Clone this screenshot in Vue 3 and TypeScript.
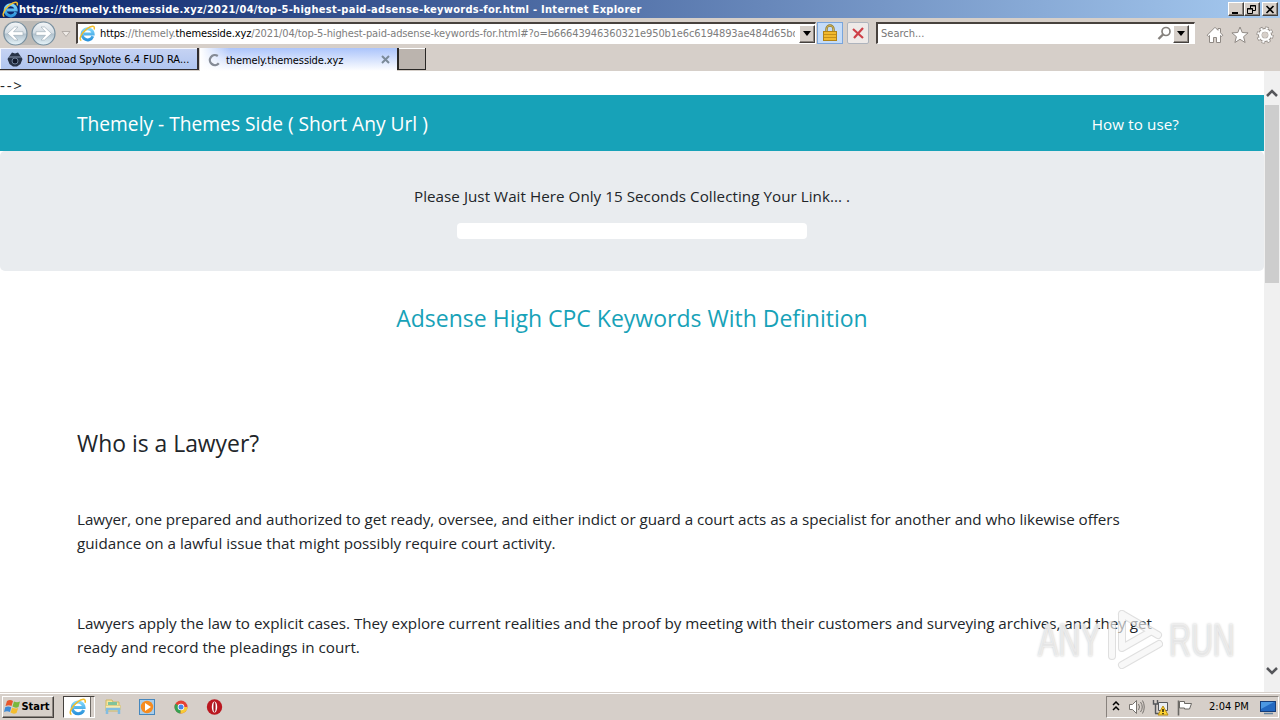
<script setup lang="ts">
import { ref } from 'vue'

interface Line {
  text: string
  spacing: number
}

const title = 'https://themely.themesside.xyz/2021/04/top-5-highest-paid-adsense-keywords-for.html - Internet Explorer'
const path = '/2021/04/top-5-highest-paid-adsense-keywords-for.html#?o=b66643946360321e950b1e6c6194893ae484d65bd'
const search = ref('')

const lawyer: Line[] = [
  { text: 'Lawyer, one prepared and authorized to get ready, oversee, and either indict or guard a court acts as a specialist for another and who likewise offers', spacing: -0.04 },
  { text: 'guidance on a lawful issue that might possibly require court activity.', spacing: 0 },
]
const practice: Line[] = [
  { text: 'Lawyers apply the law to explicit cases. They explore current realities and the proof by meeting with their customers and surveying archives, and they get', spacing: -0.035 },
  { text: 'ready and record the pleadings in court.', spacing: -0.01 },
]
</script>

<template>
  <div class="screen">
    <svg class="defs" width="0" height="0">
      <defs>
        <linearGradient id="ie-blue" x1="0" y1="0" x2="0" y2="1">
          <stop offset="0" stop-color="#7fd6fb" />
          <stop offset="1" stop-color="#2b94dc" />
        </linearGradient>
        <linearGradient id="nav-disc" x1="0" y1="0" x2="0" y2="1">
          <stop offset="0" stop-color="#f4f6f8" />
          <stop offset=".48" stop-color="#d3dce3" />
          <stop offset=".52" stop-color="#b1c1cc" />
          <stop offset="1" stop-color="#e6f4fa" />
        </linearGradient>
        <symbol id="ie" viewBox="0 0 16 16">
          <path d="M13 10.600A5.200 5.200 0 1 1 13.300 8.400H4.500" fill="none" stroke="url(#ie-blue)" stroke-width="2.800" />
          <path d="M2.200 14.600C-.8 13.700 2.600 7.200 7.400 3.600 11.200.7 15.400-.2 14.300 4.200" fill="none" stroke="#f2bd2c" stroke-width="1.400" />
        </symbol>
      </defs>
    </svg>

    <header class="titlebar">
      <svg class="title-icon" width="17" height="17"><use href="#ie" /></svg>
      <span class="title">{{ title }}</span>
      <div class="window-buttons">
        <button class="win"><svg width="14" height="11"><path d="M3 8h6v2H3z" /></svg></button>
        <button class="win"><svg width="14" height="11" fill="none" stroke="#000"><path d="M5.500 4V1.500h5v5H8M5 2h6" /><path d="M2.500 4.500h5v5h-5zM2 5h6" /></svg></button>
        <button class="win close"><svg width="14" height="11"><path d="M3.500 2l7 7M10.500 2l-7 7" stroke="#000" stroke-width="1.600" /></svg></button>
      </div>
    </header>

    <nav class="toolbar">
      <svg class="arrows" width="76" height="30">
        <path d="M15 3h28a12 12 0 0 1 0 24H15a12 12 0 0 1 0-24z" fill="#bdbab6" />
        <g fill="url(#nav-disc)" stroke="#7890a0" stroke-width="1.200">
          <circle cx="15.500" cy="15.500" r="11.500" />
          <circle cx="43.500" cy="15.500" r="11.500" />
        </g>
        <g fill="#fff" stroke="#99a8b3" stroke-width=".6">
          <path d="M7.500 15.500l7-6.500h3.500l-4.500 4.700h9.500v3.600h-9.500l4.500 4.700h-3.500z" />
          <path d="M51.500 15.500l-7-6.500H41l4.500 4.700H36v3.600h9.500L41 22h3.500z" />
        </g>
        <path d="M62 13.500h8l-4 5z" fill="#eeeae6" stroke="#a7a19c" stroke-width=".8" />
      </svg>
      <div class="address">
        <svg width="17" height="17"><use href="#ie" /></svg>
        <div class="url"><b>https</b>://themely.<b>themesside.xyz</b>{{ path }}</div>
        <button class="drop"><svg width="9" height="5"><path d="M0 0h8L4 5z" /></svg></button>
      </div>
      <button class="lock">
        <svg width="16" height="18">
          <path d="M4.500 8V5a3.500 3.500 0 0 1 7 0v3" fill="none" stroke="#8f7a31" stroke-width="2.400" />
          <path d="M4.500 8V5a3.500 3.500 0 0 1 7 0v3" fill="none" stroke="#e1c76a" stroke-width=".8" />
          <rect x="1.500" y="7.500" width="13" height="9" fill="#f1b92d" stroke="#b18318" />
          <path d="M2 10.500h12M2 13.500h12" stroke="#c69019" />
        </svg>
      </button>
      <button class="stop"><svg width="12" height="12"><path d="M1 2l10 9M11 1L2 11" stroke="#ce4048" stroke-width="2.200" /></svg></button>
      <div class="search">
        <input v-model="search" placeholder="Search...">
        <svg width="15" height="15" fill="none" stroke="#85817d"><circle cx="9" cy="5.500" r="4" stroke-width="1.700" /><path d="M6 8.500L1.500 13" stroke-width="2.400" /></svg>
        <button class="drop"><svg width="9" height="5"><path d="M0 0h8L4 5z" /></svg></button>
      </div>
      <div class="commands">
        <svg width="18" height="18" fill="#fff" stroke="#8f8984"><path d="M1.200 9.200L9 1.300l3 3V2.500h2.500v4.300l2.300 2.400-1.300 1.200-1-.9v7h-4v-5h-3v5h-4v-7l-1 .9z" /></svg>
        <svg width="18" height="18" fill="#fff" stroke="#8f8984"><path d="M9 1l2.200 5.500 5.900.4-4.500 3.800 1.500 5.800L9 13.300l-5.100 3.200 1.500-5.800L.9 6.900l5.900-.4z" /></svg>
        <svg width="18" height="18" viewBox="0 0 18 18">
          <circle cx="9" cy="9" r="7" fill="none" stroke="#8f8984" stroke-width="3.200" stroke-dasharray="3.100 2.398" />
          <circle cx="9" cy="9" r="5" fill="none" stroke="#8f8984" stroke-width="4" />
          <circle cx="9" cy="9" r="6.800" fill="none" stroke="#fff" stroke-width="2" stroke-dasharray="2.200 3.141" stroke-dashoffset="-.45" />
          <circle cx="9" cy="9" r="4.700" fill="none" stroke="#fff" stroke-width="2.700" />
        </svg>
      </div>
    </nav>

    <div class="tabs">
      <div class="tab back">
        <svg width="16" height="16">
          <path d="M2.500 5L5 1.500l3 1 3-1L13.500 5l2 3-2 5-3.500 2.500H6L2.500 13 .5 8z" fill="#283347" />
          <path d="M2 6h12" stroke="#68768a" stroke-width="1.500" /><circle cx="8" cy="10" r="3" fill="#11182a" stroke="#71819a" />
        </svg>
        <span>Download SpyNote 6.4 FUD RA...</span>
      </div>
      <div class="tab front">
        <svg width="14" height="14"><path d="M10.800 3a5 5 0 1 0 1 7.200" fill="none" stroke="#858b96" stroke-width="2.300" /></svg>
        <span>themely.themesside.xyz</span>
        <svg class="x" width="9" height="9"><path d="M1 1l7 7M8 1L1 8" stroke="#7b8a99" stroke-width="2" /></svg>
      </div>
      <div class="new-tab" />
    </div>

    <div class="viewport">
      <main class="page">
        <div class="stray">--&gt;</div>
        <div class="navbar">
          <span class="brand">Themely - Themes Side ( Short Any Url )</span>
          <a class="how">How to use?</a>
        </div>
        <section class="wait">
          <p>Please Just Wait Here Only 15 Seconds Collecting Your Link... .</p>
          <div class="progress" />
        </section>
        <h4 class="headline">Adsense High CPC Keywords With Definition</h4>
        <article>
          <h4>Who is a Lawyer?</h4>
          <p><span v-for="line in lawyer" :key="line.text" class="line" :style="{ letterSpacing: line.spacing + 'px' }">{{ line.text }}</span></p>
          <p class="second"><span v-for="line in practice" :key="line.text" class="line" :style="{ letterSpacing: line.spacing + 'px' }">{{ line.text }}</span></p>
        </article>
      </main>
      <div class="scrollbar">
        <svg width="16" height="34"><path d="M3 25l5-5 5 5" fill="none" stroke="#55565a" stroke-width="2.500" /></svg>
        <div class="thumb" />
        <svg class="down" width="16" height="34"><path d="M3 10l5 5 5-5" fill="none" stroke="#55565a" stroke-width="2.500" /></svg>
      </div>
      <div class="watermark">
        <span class="any">ANY</span>
        <svg width="60" height="64" fill="none" stroke-linejoin="round" stroke-linecap="round">
          <g stroke="#cfcfcf" stroke-width="8">
            <path d="M5 48V17M15 6l36 21M15 6v34l28-16M15 57l37-21" />
          </g>
          <g stroke="#f5f5f5" stroke-width="6">
            <path d="M5 48V17M15 6l36 21M15 6v34l28-16M15 57l37-21" />
          </g>
        </svg>
        <span class="run">RUN</span>
      </div>
    </div>

    <footer class="taskbar">
      <button class="start">
        <svg width="17" height="16">
          <path d="M3 2q3-2 6 0L7.500 7Q5 5.500 1.500 7z" fill="#e8562b" />
          <path d="M10 2.500q3 1.500 6 0L14.500 8q-3 1.500-6-.5z" fill="#79b83d" />
          <path d="M1.200 8.200q3-1.500 6 0L6 13q-3-1.500-6 0z" fill="#3e8ad6" />
          <path d="M8.200 8.700q3 1.500 6 .3L12.500 14q-3 1.500-6-.5z" fill="#f4bd2f" />
        </svg>
        Start
      </button>
      <div class="running"><svg width="18" height="18"><use href="#ie" /></svg></div>
      <div class="launch">
        <svg width="18" height="18">
          <path d="M2 2h6l1 2h6v9H2z" fill="#f6e69b" stroke="#cfb664" /><path d="M4 4h9v3H4z" fill="#7fc39c" />
          <path d="M1.500 7.500h15v4h-15z" fill="#f7eaae" stroke="#d9c47a" stroke-width=".7" />
          <path d="M3 16v-5h12v5" fill="none" stroke="#82bde1" stroke-width="2.500" />
        </svg>
        <svg width="18" height="18">
          <rect x="1.500" y="1.500" width="15" height="15" fill="#a9cdea" stroke="#4687bd" /><circle cx="9" cy="9" r="6.200" fill="#f68b1f" /><path d="M7 5l6 4-6 4z" fill="#fff" />
        </svg>
        <svg width="18" height="18">
          <circle cx="9" cy="9" r="6.500" fill="#e44133" />
          <path d="M9 9L3.400 5.700A6.500 6.500 0 0 0 8.500 15.500z" fill="#36a252" />
          <path d="M9 9h6.500a6.500 6.500 0 0 1-7 6.500z" fill="#f8cb35" />
          <circle cx="9" cy="9" r="3.300" fill="#fff" /><circle cx="9" cy="9" r="2.500" fill="#4584e9" />
        </svg>
        <svg width="18" height="18"><circle cx="8.500" cy="9" r="7.700" fill="#ba1820" /><ellipse cx="8.500" cy="9" rx="2.700" ry="5.500" fill="#fff" /><ellipse cx="8.500" cy="9" rx="1.100" ry="5" fill="#a2161e" /></svg>
      </div>
      <div class="tray">
        <svg class="chevrons" width="8" height="12" fill="none" stroke="#000" stroke-width="1.500"><path d="M1 4l3-3 3 3M1 9l3-3 3 3" /></svg>
        <svg class="speaker" width="18" height="16" fill="none" stroke="#77736f"><path d="M1.500 5.500h3L8.500 1.500v13l-4-4h-3z" fill="#fff" /><path d="M10.500 5q2 3 0 6M12.500 3q3.500 5 0 10M14.500 1.500q3.500 6.500 0 13" /></svg>
        <svg class="network" width="17" height="17"><path d="M6.500 3.500h9v8h-9z" fill="#e9eef2" stroke="#55575a" /><path d="M1.500 1v4h4V1M3.500 5v9.500M3 14.500h6" fill="none" stroke="#55575a" stroke-width="1.400" /><path d="M11 7l5 9H6z" fill="#ffd431" stroke="#b78c16" /><path d="M11 10v3M11 14v1.200" stroke="#000" stroke-width="1.300" /></svg>
        <svg class="flag" width="17" height="17"><path d="M2.500 1.500v15" stroke="#6b6965" stroke-width="1.600" /><path d="M3.500 2.500h5v2h7l-2 5.500H8.500V9h-5z" fill="#fff" stroke="#6b6965" /></svg>
        <time>2:04 PM</time>
        <svg width="17" height="15"><rect x=".5" y="1.500" width="15" height="10" fill="#2369c1" stroke="#163d78" /><path d="M1 2h13L1 9z" fill="#4c98e2" /><path d="M4 13.500h9" stroke="#64839f" stroke-width="1.500" /></svg>
      </div>
    </footer>
  </div>
</template>

<style>
body {
  overflow: hidden;
}
</style>

<style scoped>
* {
  box-sizing: border-box;
}

.screen {
  width: 1280px;
  height: 720px;
  display: flex;
  flex-direction: column;
  overflow: hidden;
  background: #d6cfc9;
  color: #000;
  font: 11px/14px 'DejaVu Sans Condensed', 'DejaVu Sans', sans-serif;
  white-space: nowrap;
}

.defs {
  position: absolute;
}

svg {
  display: block;
  flex-shrink: 0;
}

button {
  display: flex;
  align-items: center;
  justify-content: center;
  padding: 0;
  color: #000;
  font: inherit;
}

h4,
p {
  margin: 0;
  font-weight: 400;
}

.titlebar {
  height: 18px;
  flex: none;
  display: flex;
  align-items: center;
  padding: 0 2px;
  background: linear-gradient(90deg, #0a246a, #a6caf0);
}

.title {
  padding-top: 1px;
  color: #fff;
  font-weight: 700;
  letter-spacing: 0.28px;
}

.window-buttons {
  display: flex;
  margin-left: auto;
}

.win,
.drop {
  border: 1px solid;
  border-color: #fff #45413e #45413e #fff;
  background: #d6cfc9;
  box-shadow: inset -1px -1px #8b8580;
}

.win {
  width: 16px;
  height: 14px;
}

.close {
  margin-left: 2px;
}

.toolbar {
  height: 30px;
  flex: none;
  display: flex;
  align-items: center;
}

.address,
.search {
  height: 22px;
  display: flex;
  align-items: center;
  border: 1px solid #fff;
  border-top: 2px solid #48423e;
  border-left: 2px solid #48423e;
  background: #fff;
}

.address {
  width: 740px;
  padding-left: 1px;
}

.url {
  width: 695px;
  margin-left: 4px;
  padding-top: 1px;
  overflow: hidden;
  color: #7d7d7d;
  letter-spacing: -0.13px;
}

.url b {
  color: #000;
  font-weight: 400;
}

.drop {
  width: 16px;
  height: 18px;
  margin-left: auto;
}

.lock {
  width: 26px;
  height: 22px;
  margin-left: 1px;
  border: 1px solid #79a5dc;
  background: #c5dcf8;
}

.stop {
  width: 22px;
  height: 22px;
  margin-left: 4px;
  border: 1px solid #aeb4bd;
  border-radius: 2px;
  background: #eeeae8;
}

.search {
  width: 319px;
  margin-left: 7px;
  padding: 0 5px 0 3px;
}

.search input {
  flex: 1;
  min-width: 0;
  padding: 1px 0 0;
  border: 0;
  outline: 0;
  font: inherit;
}

.search input::placeholder {
  color: #777;
}

.search .drop {
  margin-left: 1px;
}

.commands {
  display: flex;
  gap: 7px;
  margin-left: 11px;
  padding-top: 4px;
}

.tabs {
  height: 23px;
  flex: none;
  display: flex;
  align-items: flex-start;
}

.tab {
  height: 22px;
  display: flex;
  align-items: center;
}

.tab span {
  padding-top: 2px;
}

.back {
  width: 199px;
  gap: 4px;
  padding-top: 1px;
  padding-left: 7px;
  border: solid #302d30;
  border-width: 0 2px 1px 0;
  background: linear-gradient(#c6d3f3, #b0c5f0);
  box-shadow: inset 1px 1px #f4f6fd;
}

.front {
  width: 197px;
  height: 23px;
  margin-left: 1px;
  padding: 0 7px;
  background: linear-gradient(90deg, #fff, transparent 30px), linear-gradient(#abc4fb, #fff);
}

.front span {
  margin-left: 5px;
  letter-spacing: -0.1px;
}

.x {
  margin-left: auto;
}

.new-tab {
  width: 29px;
  height: 22px;
  border: solid #292725;
  border-width: 0 1px 1px 2px;
  background: #bbb4ae;
  box-shadow: inset 0 1px #fff;
}

.viewport {
  position: relative;
  height: 621px;
  flex: none;
  display: flex;
}

.page {
  width: 1264px;
  overflow: hidden;
  background: #fff;
  color: #212529;
  font: 15.2px/24px 'Open Sans', 'Noto Sans', sans-serif;
}

.stray {
  height: 24px;
  padding-top: 2px;
  letter-spacing: 1.8px;
}

.navbar {
  height: 56px;
  display: flex;
  align-items: center;
  justify-content: space-between;
  padding: 2px 85px 0 77px;
  background: #17a2b8;
  color: #fff;
}

.brand {
  font-size: 19.2px;
}

.how {
  letter-spacing: 0.1px;
}

.wait {
  height: 120px;
  padding-top: 33px;
  border-radius: 5px;
  background: #e9ecef;
  text-align: center;
  letter-spacing: 0.04px;
}

.progress {
  width: 350px;
  height: 16px;
  margin: 15px auto 0;
  border-radius: 4px;
  background: #fff;
}

.headline {
  margin-top: 33px;
  color: #17a2b8;
  font-size: 23px;
  line-height: 29px;
  text-align: center;
}

article {
  padding: 96px 77px 0;
}

article h4 {
  margin-bottom: 49px;
  font-size: 22.9px;
  line-height: 29px;
}

.line {
  display: block;
}

.second {
  margin-top: 56px;
}

.scrollbar {
  width: 16px;
  display: flex;
  flex-direction: column;
  background: #f0f0f0;
}

.thumb {
  width: 14px;
  height: 178px;
  margin-left: 1px;
  background: #cdcdcd;
}

.down {
  margin-top: auto;
}

.watermark {
  position: absolute;
  left: 1038px;
  top: 537px;
  display: flex;
  align-items: center;
  color: rgba(243, 243, 243, 0.75);
  font: 46px/64px 'Liberation Sans', sans-serif;
  text-shadow: 0 0 3px #b5b5b5;
  -webkit-text-stroke: 1px rgba(243, 243, 243, 0.75);
}

.watermark svg {
  margin: 0 2px 0 6px;
  opacity: 0.65;
}

.any,
.run {
  width: 63px;
  transform: scaleX(0.66);
  transform-origin: left;
}

.taskbar {
  height: 28px;
  flex: none;
  display: flex;
  align-items: center;
  padding-top: 1px;
  border-top: 1px solid #d6cfc9;
  box-shadow: inset 0 1px #fff;
}

.start {
  width: 52px;
  height: 22px;
  margin-left: 2px;
  border: 1px solid;
  border-color: #fff #45413e #45413e #fff;
  background: #d6cfc9;
  box-shadow: inset -1px -1px #8b8580;
  font-weight: 700;
}

.start svg {
  margin-left: -2px;
}

.running {
  width: 32px;
  height: 22px;
  display: flex;
  align-items: center;
  margin-left: 9px;
  padding-left: 5px;
  border: 1px solid;
  border-color: #45413e #fff #fff #45413e;
  background: #fff;
  box-shadow: inset -3px 0 #d6cfc9, inset -4px 0 #6e6965;
}

.launch {
  display: flex;
  gap: 16px;
  margin-left: 9px;
}

.tray {
  width: 173px;
  height: 22px;
  display: flex;
  align-items: center;
  margin-left: auto;
  margin-right: 1px;
  padding-left: 5px;
  border: 1px solid;
  border-color: #88827d #fff #fff #88827d;
}

.speaker {
  margin-left: 8px;
}

.network {
  margin-left: 6px;
}

.flag {
  margin-left: 7px;
}

.tray time {
  width: 41px;
  margin: 0 10px 0 16px;
}
</style>
